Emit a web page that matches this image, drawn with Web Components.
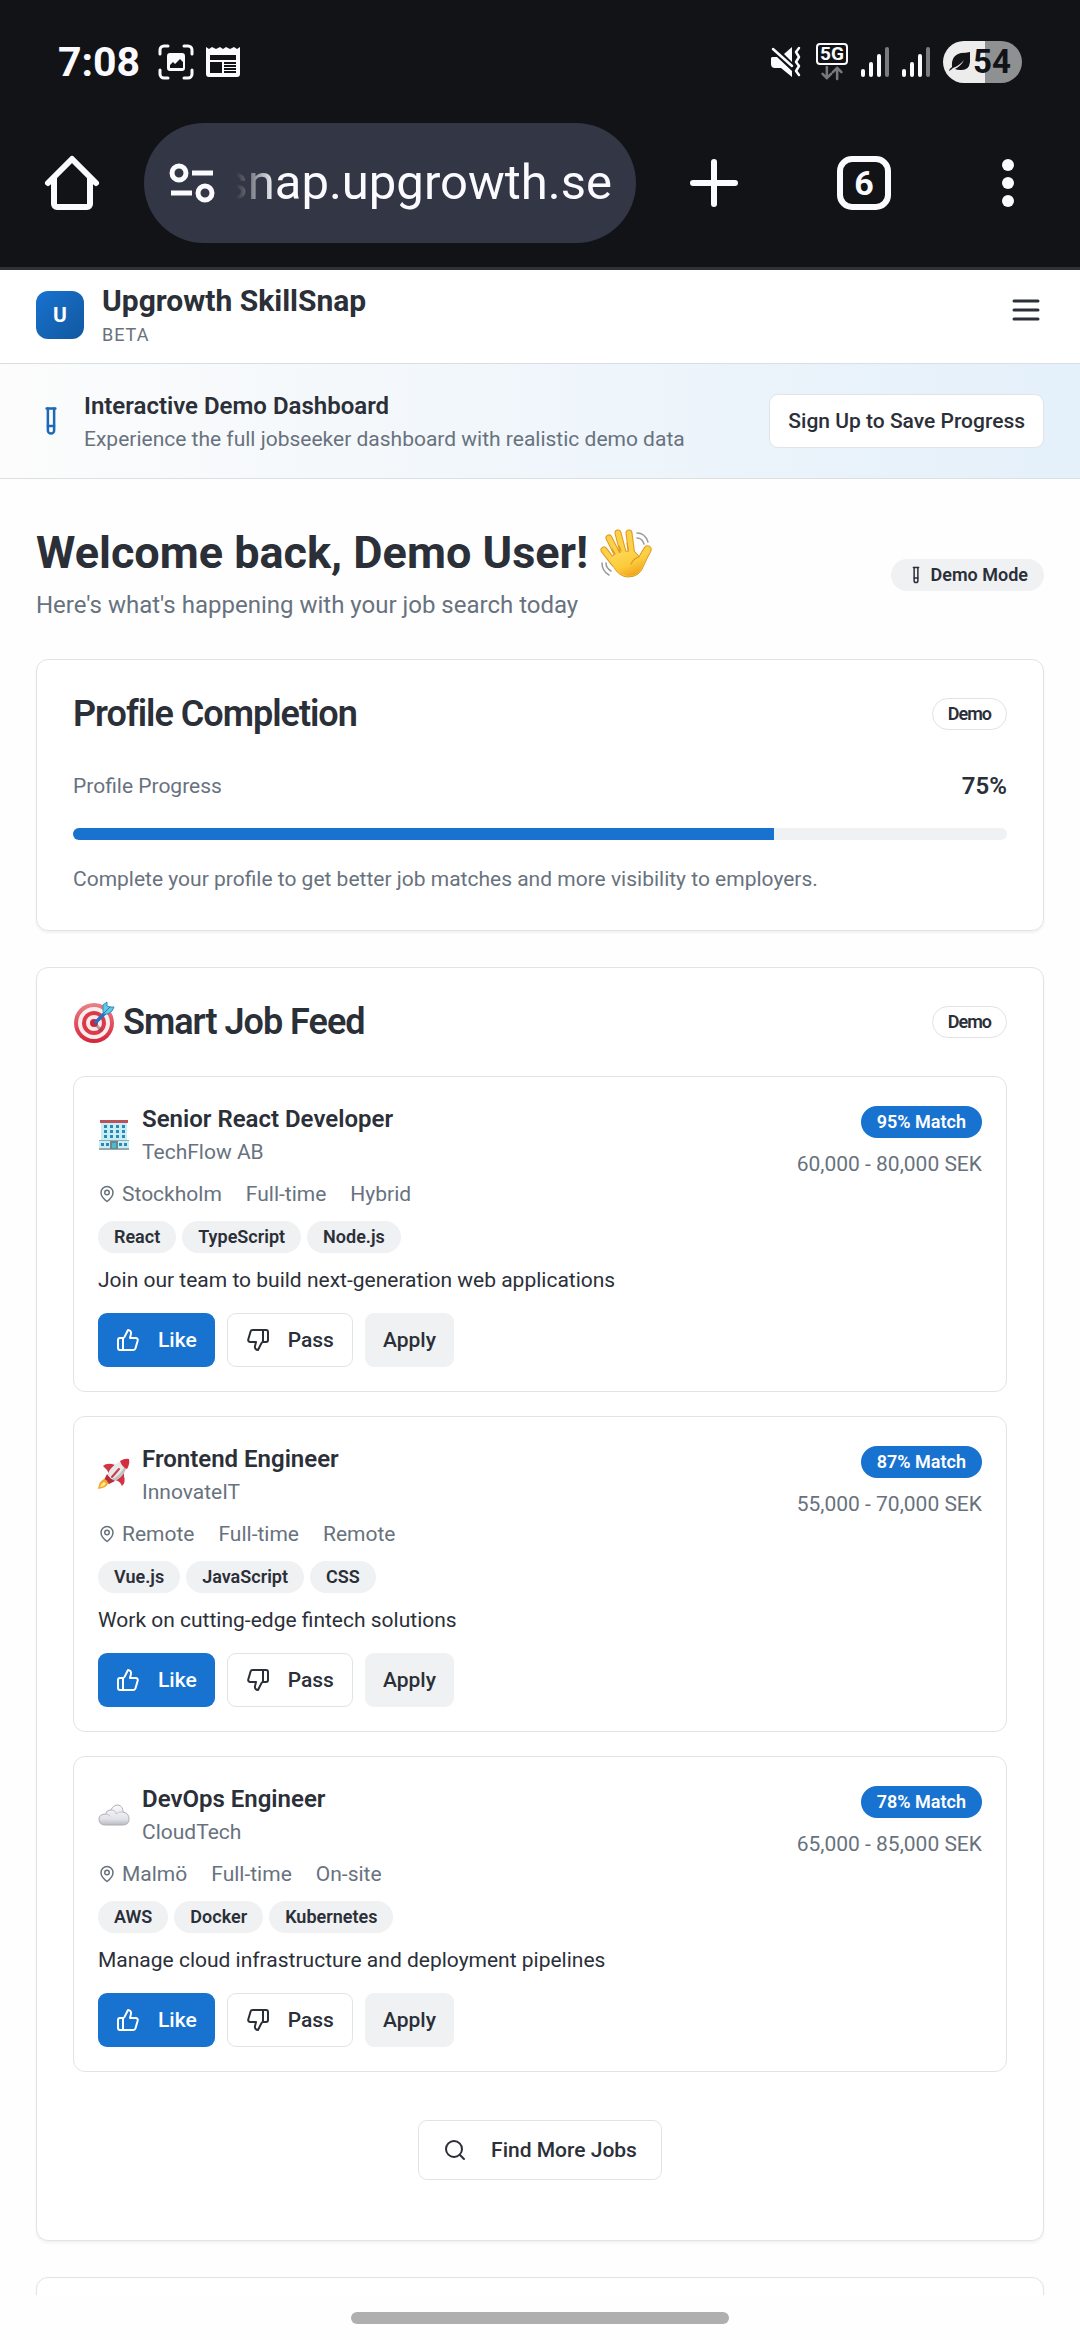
<!DOCTYPE html>
<html lang="en">
<head>
<meta charset="utf-8">
<meta name="viewport" content="width=device-width, initial-scale=1">
<title>Upgrowth SkillSnap</title>
<style>
  :root {
    --ink: #2b2f38;
    --muted: #68727e;
    --primary: #1872d0;
    --secondary: #eff1f3;
    --line: #e1e3e5;
  }
  html, body { margin: 0; height: 100%; }
  body { font-family: Roboto, "Liberation Sans", sans-serif; color: var(--ink); background: #fefefe; }
</style>
</head>
<body>
<phone-screen>
  <status-bar slot="top"></status-bar>
  <browser-toolbar slot="top" url="snap.upgrowth.se" tabs="6"></browser-toolbar>
  <site-header name="Upgrowth SkillSnap" tag="BETA" letter="U"></site-header>
  <demo-banner heading="Interactive Demo Dashboard">
    Experience the full jobseeker dashboard with realistic demo data
    <ui-button slot="action" variant="outline">Sign Up to Save Progress</ui-button>
  </demo-banner>
  <dashboard-main>
    <welcome-row></welcome-row>
    <dash-card heading="Profile Completion" badge="Demo">
      <profile-progress value="75"></profile-progress>
    </dash-card>
    <dash-card heading="Smart Job Feed" badge="Demo" emoji="target">
      <job-feed></job-feed>
    </dash-card>
    <dash-card></dash-card>
  </dashboard-main>
</phone-screen>

<script>
const ICONS = {
  menu: ['0 0 24 24', '<path d="M4 6h16M4 12h16M4 18h16"/>'],
  tube: ['0 0 24 24', '<path d="M14.500 2v17.500c0 1.400-1.100 2.500-2.500 2.500c-1.400 0-2.500-1.100-2.500-2.500V2"/><path d="M8.500 2h7M14.500 16h-5"/>'],
  pin: ['0 0 24 24', '<path d="M20 10c0 6-8 12-8 12s-8-6-8-12a8 8 0 0 1 16 0Z"/><circle cx="12" cy="10" r="3"/>'],
  up: ['0 0 24 24', '<path d="M7 10v12"/><path d="M15 5.880 14 10h5.830a2 2 0 0 1 1.920 2.560l-2.330 8A2 2 0 0 1 17.500 22H4a2 2 0 0 1-2-2v-8a2 2 0 0 1 2-2h2.760a2 2 0 0 0 1.790-1.110L12 2a3.130 3.130 0 0 1 3 3.880Z"/>'],
  down: ['0 0 24 24', '<path d="M17 14V2"/><path d="M9 18.120 10 14H4.170a2 2 0 0 1-1.920-2.560l2.330-8A2 2 0 0 1 6.500 2H20a2 2 0 0 1 2 2v8a2 2 0 0 1-2 2h-2.760a2 2 0 0 0-1.790 1.110L12 22a3.130 3.130 0 0 1-3-3.880Z"/>'],
  search: ['0 0 24 24', '<circle cx="11" cy="11" r="8"/><path d="m21 21-4.300-4.300"/>'],
  home: ['0 0 54 54', '<path d="M3 27 27 3 51 27M9 22V48a3 3 0 0 0 3 3H42a3 3 0 0 0 3-3V22" stroke-width="6"/>'],
  tune: ['0 0 48 42', '<g stroke-width="5"><circle cx="11" cy="11" r="7"/><circle cx="37" cy="31" r="7"/><path stroke-linecap="butt" d="M24 11H45M3 31H24"/></g>'],
  plus: ['0 0 48 48', '<path d="M24 3V45M3 24H45" stroke-width="6"/>'],
  dots: ['0 0 12 48', '<g fill="currentColor" stroke="none"><circle cx="6" cy="6" r="6"/><circle cx="6" cy="24" r="6"/><circle cx="6" cy="42" r="6"/></g>'],
  capture: ['0 0 36 36', '<path stroke-width="3" d="M2 10V6a4 4 0 0 1 4-4h4M26 2h4a4 4 0 0 1 4 4v4M34 26v4a4 4 0 0 1-4 4h-4M10 34H6a4 4 0 0 1-4-4v-4"/><path fill="currentColor" stroke="none" fill-rule="evenodd" d="M12 9h12a3 3 0 0 1 3 3v12a3 3 0 0 1-3 3H12a3 3 0 0 1-3-3V12a3 3 0 0 1 3-3ZM12 24h13v-6l-3-3-5 5-2-2-3 3Z"/>'],
  news: ['0 0 34 30', '<path fill="currentColor" stroke="none" fill-rule="evenodd" d="M0 0l3 2 3-2 4 2 4-2 3 2 3-2 4 2 4-2 3 2 3-2V27a3 3 0 0 1-3 3H3a3 3 0 0 1-3-3ZM4 8v5H30V8ZM4 15V26H16V15ZM18 15v2H30v-2ZM18 18v2H30v-2ZM18 21v2H30v-2ZM18 24v2H30v-2Z"/>'],
  mute: ['0 0 30 30', '<g stroke="none" fill="currentColor"><path d="M1 10H6L21 24V30L10 21H4Q0 21 0 17V11Z"/><path d="M13 7 21 0V15Z"/></g><path stroke-width="2.500" d="M2 2 21 19M28 1 25 5 28 10 25 15 28 19 25 24 28 28"/>'],
  arrows: ['0 0 28 16', '<path stroke-width="3" d="M8 1V14M3 9 8 14 13 9M20 15V2M15 7 20 2 25 7"/>'],
  signal: ['0 0 28 30', '<g fill="currentColor" stroke="none"><rect x="0" y="22" width="4" height="8" rx="2"/><rect x="8" y="15" width="4" height="15" rx="2"/><rect x="16" y="7" width="4" height="23" rx="2"/><rect x="24" y="0" width="4" height="30" rx="2" opacity=".45"/></g>'],
  leaf: ['0 0 22 20', '<path fill="currentColor" stroke="none" d="M21 0V10Q20 19 11 18Q8 18 6 17Q12 14 15 8Q10 14 4 16Q2 18 0 19Q0 17 3 15Q2 3 12 1Q17 1 21 0Z"/>'],
  wave: ['0 0 52 50', `<defs><linearGradient id="hand" x1="0" y1="0" x2=".6" y2="1"><stop offset="0" stop-color="#ffd95a"/><stop offset=".6" stop-color="#fccb3c"/><stop offset="1" stop-color="#f0a51c"/></linearGradient></defs>
    <g stroke="#dc9a20" stroke-width="7"><path d="M4 22 14 35M9 10 19 30M18 5 24 28M29 5 32 28M47 21 38 36"/></g>
    <path fill="#fcca3d" stroke="#dc9a20" stroke-width="1" d="M10 30Q18 22 34 23Q38 26 39 29Q43 21 48 18Q52 18 51 23Q47 30 44 37Q40 49 28 49Q19 49 13 38Z"/>
    <g stroke="#fdd04a" stroke-width="5"><path d="M4 22 14 35M9 10 19 30M18 5 24 28M29 5 32 28M47 21 38 36"/></g>
    <path fill="url(#hand)" stroke="none" d="M11 30Q18 23 34 24L39 31L46 25Q45 34 42 39Q39 48 28 48Q19 47 12 36Z"/>
    <path stroke="#e0961b" stroke-width="1.200" d="M39 29Q34 30 31 36M15 26 12 21M21 23 19 18M28 22 27 15"/>
    <g stroke="#959b9b" stroke-width="1.500"><path d="M37 5Q45 5 48 14M37 10Q42 10 44 16M2 35Q2 43 9 47M6 35Q6 40 11 43"/></g>`],
  target: ['0 0 42 42', `<defs><linearGradient id="ring" x1="0" y1="0" x2="0" y2="1"><stop offset="0" stop-color="#e98287"/><stop offset="1" stop-color="#d52438"/></linearGradient></defs><g stroke="none"><circle cx="21" cy="22" r="20" fill="url(#ring)"/><circle cx="21" cy="22" r="16" fill="#f9eeee"/><circle cx="21" cy="22" r="12" fill="#dc3a47"/><circle cx="21" cy="22" r="8" fill="#f9eaea"/><circle cx="21" cy="22" r="4" fill="#ce2639"/></g>
    <path stroke="#6c4b60" stroke-width="3" opacity=".5" d="M23 24 28 29"/><path stroke="#286fc0" stroke-width="3.500" d="M23 21 34 10"/><path fill="#63c8e4" stroke="#2c8fbd" stroke-width="1" d="M30 9V4L34 1V5L37 6L41 6L39 10L35 13L31 13Z"/><path stroke="#2b7ab5" stroke-width="1" d="M31 12 37 6"/>`],
  building: ['0 0 32 32', `<g stroke="none"><path fill="#c9edf5" d="M3 4H29V23H31V31H1V23H3Z"/><path fill="#b9535b" d="M2 2H30V5H2Z"/><path fill="#94aab0" d="M1 30H31V32H1ZM1 22H31V23H1Z"/><path fill="#278bb5" d="M6 7h3v3H6ZM12 7h3v3h-3ZM18 7h3v3h-3ZM24 7h3v3h-3ZM6 12h3v3H6ZM12 12h3v3h-3ZM18 12h3v3h-3ZM24 12h3v3h-3ZM6 17h3v3H6ZM12 17h3v3h-3ZM18 17h3v3h-3ZM24 17h3v3h-3ZM3 25h3v3H3ZM8 25h3v3H8ZM21 25h3v3h-3ZM26 25h3v3h-3Z"/><path fill="#6d858c" d="M12 23H20V31H12Z"/><path fill="#45bed0" d="M14 25H18V30H14Z"/></g>`],
  rocket: ['0 0 32 32', `<g stroke="none"><path fill="#cf3546" d="M5 8Q8 5 14 6L20 8L11 16Q9 11 5 8ZM26 13V18Q28 25 24 28Q22 23 17 22Z"/><path fill="#e9e7e7" d="M9 21Q9 10 23 3L29 9Q24 22 13 24Z"/><path fill="#c4bfc1" d="M29 9Q24 22 13 24L12 22Q23 18 27 7Z"/><path fill="#d32d3f" d="M22 3Q27 0 31 1Q32 6 29 11Q24 9 22 3Z"/><path fill="#b82c3b" d="M9 16Q12 21 17 23L11 26L6 22Z"/><path fill="#f6a72a" d="M6 21Q10 22 10 26Q8 30 0 31Q1 23 6 21Z"/><path fill="#ffe98a" d="M6 24Q9 25 7 27Q5 29 2 29Q3 25 6 24Z"/></g><path stroke="#c3404c" stroke-width="2" d="M14 19 21 11"/>`],
  cloud: ['0 0 32 32', `<defs><linearGradient id="cl" x1="0" y1="0" x2="0" y2="1"><stop offset="0" stop-color="#fafafc"/><stop offset=".7" stop-color="#e2e2e9"/><stop offset="1" stop-color="#b9b9c3"/></linearGradient></defs><path fill="url(#cl)" stroke="#aeaeb6" stroke-width="1" d="M7 27Q1 27 1 21Q1 16 8 16Q8 12 13 12Q15 7 20 7Q25 8 25 14Q31 15 31 21Q31 27 25 27Z"/><path stroke="#c5c5cc" stroke-width="1" d="M8 16Q10 16 12 18M13 12Q18 12 18 16Q21 13 25 14"/>`]
};

function define(tag, css, render) {
  customElements.define(tag, class extends HTMLElement {
    connectedCallback() {
      if (this.shadowRoot) return;
      const root = this.attachShadow({ mode: 'open' });
      const t = document.createElement('template');
      t.innerHTML = `<style>:host,*{box-sizing:border-box}${css}</style>${render(this)}`;
      root.append(t.content.cloneNode(true));
    }
  });
}
const attr = (el, name) => el.getAttribute(name) || '';

define('ui-icon', `
  :host{display:inline-block;flex:none;width:24px;height:24px}
  svg{display:block;width:100%;height:100%;overflow:visible}`,
  el => {
    const [box, body] = ICONS[attr(el, 'name')];
    return `<svg viewBox="${box}" fill="none" stroke="currentColor" stroke-width="2" stroke-linecap="round" stroke-linejoin="round" aria-hidden="true">${body}</svg>`;
  });

define('ui-button', `
  :host{display:inline-flex}
  button{display:flex;align-items:center;gap:18px;height:54px;margin:0;padding:0 18px;border:0;border-radius:9px;
    font:500 21px/30px Roboto,sans-serif;color:var(--ink);background:#fff;cursor:pointer;white-space:nowrap}
  .primary{background:var(--primary);color:#fff}
  .outline{border:1px solid var(--line)}
  .secondary{background:var(--secondary)}
  .large{height:60px;padding:0 24px;gap:24px}`,
  el => `<button type="button" class="${attr(el, 'variant')} ${attr(el, 'size')}"><slot></slot></button>`);

define('ui-badge', `
  :host{display:inline-flex;align-items:center;gap:6px;height:32px;padding:0 15px;border:1px solid transparent;border-radius:16px;
    font-size:18px;font-weight:600;line-height:24px;white-space:nowrap;color:var(--ink);background:var(--secondary)}
  :host([variant=primary]){background:var(--primary);color:#fff}
  :host([variant=outline]){background:#fff;border-color:var(--line)}`,
  () => `<slot></slot>`);

define('phone-screen', `
  :host{display:flex;flex-direction:column;height:100vh;overflow:hidden}
  .chrome{flex:none;background:#121317;color:#fbfbff;border-bottom:3px solid #303134}
  .page{flex:1;min-height:0;overflow:hidden}
  .nav{flex:none;display:flex;align-items:center;justify-content:center;height:45px}
  .nav i{width:35%;height:12px;border-radius:6px;background:#afafaf}`,
  () => `<div class="chrome"><slot name="top"></slot></div><div class="page"><slot></slot></div><div class="nav"><i></i></div>`);

define('status-bar', `
  :host{display:flex;align-items:center;justify-content:space-between;height:123px;padding:0 58px}
  div{display:flex;align-items:center}
  time{font-size:41px;font-weight:700;line-height:48px;margin-right:18px}
  .cap{width:36px;height:36px;margin-right:12px}
  .news{width:34px;height:30px}
  .right{gap:13px}
  .mute{width:30px;height:30px}
  .net{flex-direction:column;gap:1px;margin-left:2px}
  .net span{border:2px solid;border-radius:4px;width:32px;height:22px;font-size:19px;font-weight:700;line-height:18px;text-align:center}
  .net ui-icon{width:24px;height:14px;color:#77787c}
  .sig{width:28px;height:30px}
  .battery{gap:2px;height:42px;width:79px;padding-left:6px;border-radius:21px;color:#121317;background:linear-gradient(90deg,#ececec 53%,#8f9092 53%);
    font-size:33px;font-weight:700;line-height:42px}
  .battery ui-icon{width:22px;height:20px}`,
  () => `<div><time>7:08</time><ui-icon class="cap" name="capture"></ui-icon><ui-icon class="news" name="news"></ui-icon></div>
    <div class="right"><ui-icon class="mute" name="mute"></ui-icon>
    <div class="net"><span>5G</span><ui-icon name="arrows"></ui-icon></div>
    <ui-icon class="sig" name="signal"></ui-icon><ui-icon class="sig" name="signal"></ui-icon>
    <div class="battery"><ui-icon name="leaf"></ui-icon><span>54</span></div></div>`);

define('browser-toolbar', `
  :host{display:flex;align-items:center;padding-bottom:24px}
  button{display:flex;align-items:center;justify-content:center;flex:none;width:144px;height:120px;padding:0;border:0;background:none;color:inherit;font:700 34px/42px Roboto,sans-serif}
  .new{width:156px}
  .home ui-icon{width:54px;height:54px}
  .new ui-icon{width:48px;height:48px}
  .more ui-icon{width:12px;height:48px}
  .tabs span{width:54px;height:54px;border:6px solid;border-radius:15px}
  .pill{flex:1;min-width:0;display:flex;align-items:center;height:120px;padding:0 24px;border-radius:60px;background:#333645}
  .pill ui-icon{width:48px;height:42px}
  input{flex:1;min-width:0;height:72px;padding:0;border:0;outline:0;background:none;color:inherit;text-align:right;
    font:400 49px/72px Roboto,sans-serif;-webkit-mask-image:linear-gradient(90deg,transparent 20px,#000 60px);mask-image:linear-gradient(90deg,transparent 20px,#000 60px)}`,
  el => `<button class="home" aria-label="Home"><ui-icon name="home"></ui-icon></button>
    <div class="pill"><ui-icon name="tune"></ui-icon><input type="text" aria-label="Address" value="${attr(el, 'url')}"></div>
    <button class="new" aria-label="New tab"><ui-icon name="plus"></ui-icon></button>
    <button class="tabs" aria-label="Tabs"><span>${attr(el, 'tabs')}</span></button>
    <button class="more" aria-label="More"><ui-icon name="dots"></ui-icon></button>`);

define('site-header', `
  :host{display:flex;align-items:center;gap:18px;height:94px;padding:11px 36px 14px;border-bottom:1px solid #dcdfe2;background:#fff}
  .logo{display:flex;align-items:center;justify-content:center;width:48px;height:48px;border-radius:12px;background:linear-gradient(135deg,#1872d0,#12589f);color:#fff;font-size:21px;font-weight:700;line-height:30px}
  .name{flex:1}
  h2{margin:0;font-size:30px;font-weight:700;line-height:40px}
  p{margin:0;font-size:18px;line-height:28px;color:var(--muted);letter-spacing:1px}
  button{align-self:flex-start;width:36px;height:58px;padding:0;border:0;background:none;color:var(--ink)}
  ui-icon{display:block;width:36px;height:36px}`,
  el => `<div class="logo">${attr(el, 'letter')}</div><div class="name"><h2>${attr(el, 'name')}</h2><p>${attr(el, 'tag')}</p></div>
    <button aria-label="Menu"><ui-icon name="menu"></ui-icon></button>`);

define('demo-banner', `
  :host{display:flex;align-items:center;gap:18px;height:115px;padding:0 36px;border-bottom:1px solid #dcdfe2;background:linear-gradient(90deg,#fcfcfc,#e4f0fa)}
  ui-icon{width:30px;height:30px;color:#1b6ab9}
  div{flex:1}
  h3{margin:0;font-size:24px;font-weight:600;line-height:36px}
  p{margin:0;font-size:21px;line-height:30px;color:var(--muted)}`,
  el => `<ui-icon name="tube"></ui-icon><div><h3>${attr(el, 'heading')}</h3><p><slot></slot></p></div><slot name="action"></slot>`);

define('dashboard-main', `
  :host{display:flex;flex-direction:column;gap:36px;padding:48px 36px}`,
  () => `<slot></slot>`);

define('welcome-row', `
  :host{display:flex;align-items:center;justify-content:space-between}
  h1{display:flex;align-items:center;gap:12px;margin:0 0 8px;font-size:45px;font-weight:700;line-height:52px}
  h1 ui-icon{width:52px;height:50px}
  p{margin:0;font-size:24px;line-height:36px;color:var(--muted)}
  ui-badge ui-icon{width:18px;height:18px}`,
  () => `<div><h1>Welcome back, Demo User!<ui-icon name="wave"></ui-icon></h1><p>Here's what's happening with your job search today</p></div>
    <ui-badge><ui-icon name="tube"></ui-icon>Demo Mode</ui-badge>`);

define('dash-card', `
  :host{display:block;padding:36px;border:1px solid var(--line);border-radius:12px;background:#fff;box-shadow:0 2px 3px rgba(0,0,0,.05)}
  header{display:flex;align-items:center;justify-content:space-between;height:36px;margin-bottom:36px;letter-spacing:-1px}
  h2{display:flex;align-items:center;gap:8px;margin:0;font-size:36px;font-weight:600;line-height:36px}
  h2 ui-icon{width:42px;height:42px}`,
  el => `<header><h2>${attr(el, 'emoji') ? `<ui-icon name="${attr(el, 'emoji')}"></ui-icon>` : ''}<span>${attr(el, 'heading')}</span></h2>
    ${attr(el, 'badge') ? `<ui-badge variant="outline">${attr(el, 'badge')}</ui-badge>` : ''}</header><slot></slot>`);

define('profile-progress', `
  :host{display:flex;flex-direction:column;gap:24px;font-size:21px;line-height:30px;color:var(--muted)}
  div{display:flex;align-items:center;justify-content:space-between}
  strong{font-size:24px;font-weight:600;line-height:36px;color:var(--ink)}
  progress{display:block;appearance:none;-webkit-appearance:none;width:100%;height:12px;border:0;border-radius:6px;overflow:hidden;background:var(--secondary)}
  progress::-webkit-progress-bar{background:var(--secondary)}
  progress::-webkit-progress-value{background:var(--primary)}
  p{margin:0}`,
  el => `<div><label for="bar">Profile Progress</label><strong>${attr(el, 'value')}%</strong></div>
    <progress id="bar" max="100" value="${attr(el, 'value')}"></progress>
    <p>Complete your profile to get better job matches and more visibility to employers.</p>`);

define('job-card', `
  :host{display:block;padding:24px;border:1px solid var(--line);border-radius:12px;font-size:21px;line-height:30px}
  .top{display:flex;justify-content:space-between;align-items:flex-start}
  .who{display:flex;align-items:center;gap:12px}
  .who ui-icon{width:32px;height:32px}
  h3{margin:0;font-size:24px;font-weight:600;line-height:36px}
  p{margin:0}
  .muted{color:var(--muted)}
  .fit{display:flex;flex-direction:column;align-items:flex-end;gap:6px}
  .match{display:flex;align-items:center;height:42px}
  .meta{display:flex;gap:24px}
  .meta span{display:flex;align-items:center;gap:6px}
  .meta ui-icon{width:18px;height:18px}
  .tags{display:flex;gap:6px;margin:12px 0}
  .actions{display:flex;gap:12px;margin-top:18px}`,
  el => {
    const [place, ...rest] = attr(el, 'meta').split('|');
    return `<div class="top"><div class="who"><ui-icon name="${attr(el, 'emoji')}"></ui-icon><div><h3>${attr(el, 'role')}</h3><p class="muted">${attr(el, 'company')}</p></div></div>
      <div class="fit"><div class="match"><ui-badge variant="primary">${attr(el, 'match')}% Match</ui-badge></div><p class="muted">${attr(el, 'salary')} SEK</p></div></div>
      <div class="meta muted"><span><ui-icon name="pin"></ui-icon>${place}</span>${rest.map(m => `<span>${m}</span>`).join('')}</div>
      <div class="tags">${attr(el, 'tags').split('|').map(t => `<ui-badge>${t}</ui-badge>`).join('')}</div>
      <p><slot></slot></p>
      <div class="actions"><ui-button variant="primary"><ui-icon name="up"></ui-icon>Like</ui-button>
      <ui-button variant="outline"><ui-icon name="down"></ui-icon>Pass</ui-button><ui-button variant="secondary">Apply</ui-button></div>`;
  });

define('job-feed', `
  :host{display:flex;flex-direction:column;gap:24px}
  .more{display:flex;justify-content:center;padding:24px 0}`,
  () => `<job-card emoji="building" role="Senior React Developer" company="TechFlow AB" match="95" salary="60,000 - 80,000" meta="Stockholm|Full-time|Hybrid" tags="React|TypeScript|Node.js">Join our team to build next-generation web applications</job-card>
    <job-card emoji="rocket" role="Frontend Engineer" company="InnovateIT" match="87" salary="55,000 - 70,000" meta="Remote|Full-time|Remote" tags="Vue.js|JavaScript|CSS">Work on cutting-edge fintech solutions</job-card>
    <job-card emoji="cloud" role="DevOps Engineer" company="CloudTech" match="78" salary="65,000 - 85,000" meta="Malmö|Full-time|On-site" tags="AWS|Docker|Kubernetes">Manage cloud infrastructure and deployment pipelines</job-card>
    <div class="more"><ui-button variant="outline" size="large"><ui-icon name="search"></ui-icon>Find More Jobs</ui-button></div>`);
</script>
</body>
</html>
